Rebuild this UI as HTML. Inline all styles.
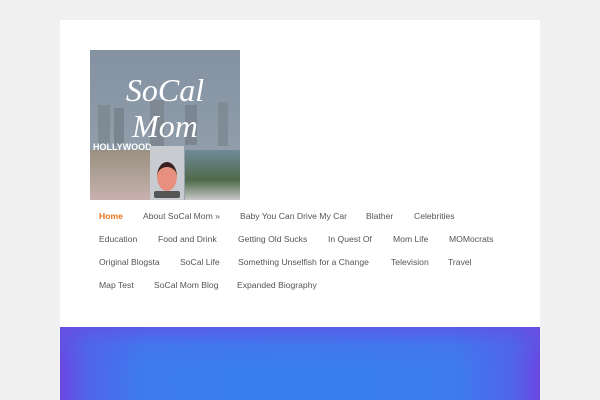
<!DOCTYPE html>
<html><head><style>
html,body{margin:0;padding:0;}
body{width:600px;height:400px;background:#f0f0f0;position:relative;overflow:hidden;font-family:"Liberation Sans",sans-serif;}
.card{position:absolute;left:60px;top:20px;width:480px;height:380px;background:#fff;}
.logo{position:absolute;left:90px;top:50px;width:150px;height:150px;overflow:hidden;background:linear-gradient(#8391a2 0%,#8d9aa8 50%,#9aa5ae 100%);}
.n{position:absolute;font-size:8.6px;color:#555;white-space:nowrap;}
.blue{position:absolute;left:60px;top:327px;width:480px;height:73px;background:linear-gradient(90deg,#6a47e2 0%,#4f66ea 6%,#3c7cf0 18%,#3a7ff0 50%,#3c7cf0 82%,#4f66ea 94%,#6a47e2 100%);}
.blue:after{content:"";position:absolute;left:0;top:0;width:100%;height:100%;background:linear-gradient(rgba(100,80,228,0.7) 0%,rgba(80,100,232,0.3) 25%,rgba(60,125,240,0) 55%);}
</style></head><body>
<div class="card"></div>
<div class="logo">
  <div style="position:absolute;left:8px;top:55px;width:12px;height:40px;background:#7f8a95"></div>
  <div style="position:absolute;left:24px;top:58px;width:10px;height:38px;background:#7a8590"></div>
  <div style="position:absolute;left:60px;top:50px;width:14px;height:46px;background:#7d8893"></div>
  <div style="position:absolute;left:95px;top:55px;width:12px;height:40px;background:#7b8692"></div>
  <div style="position:absolute;left:128px;top:52px;width:10px;height:44px;background:#808b96"></div>
  <div style="position:absolute;left:0;top:100px;width:60px;height:50px;background:linear-gradient(#9a9080,#b8a8a0 70%,#c9b0b0)"></div>
  <div style="position:absolute;left:95px;top:100px;width:55px;height:50px;background:linear-gradient(#6f8a98,#4f6a4a 60%,#c8c8c8)"></div>
  <div style="position:absolute;left:3px;top:92px;font:bold 9px 'Liberation Sans',sans-serif;color:#fff">HOLLYWOOD</div>
  <div style="position:absolute;left:60px;top:96px;width:34px;height:54px;background:#c8ccd0"></div>
  <div style="position:absolute;left:67px;top:112px;width:20px;height:24px;border-radius:50%;background:#e89080;border-top:5px solid #3a2020"></div>
  <div style="position:absolute;left:64px;top:141px;width:26px;height:7px;background:#555;border-radius:2px"></div>
  <div style="position:absolute;left:0;top:22px;width:150px;text-align:center;font:italic 32px/36px 'Liberation Serif',serif;color:#fff">SoCal<br>Mom</div>
</div>
<span class="n" style="left:99px;top:211px;color:#e8741c;font-weight:bold">Home</span>
<span class="n" style="left:143px;top:211px">About SoCal Mom »</span>
<span class="n" style="left:240px;top:211px">Baby You Can Drive My Car</span>
<span class="n" style="left:366px;top:211px">Blather</span>
<span class="n" style="left:414px;top:211px">Celebrities</span>
<span class="n" style="left:99px;top:234px">Education</span>
<span class="n" style="left:158px;top:234px">Food and Drink</span>
<span class="n" style="left:238px;top:234px">Getting Old Sucks</span>
<span class="n" style="left:328px;top:234px">In Quest Of</span>
<span class="n" style="left:393px;top:234px">Mom Life</span>
<span class="n" style="left:449px;top:234px">MOMocrats</span>
<span class="n" style="left:99px;top:257px">Original Blogsta</span>
<span class="n" style="left:180px;top:257px">SoCal Life</span>
<span class="n" style="left:238px;top:257px">Something Unselfish for a Change</span>
<span class="n" style="left:391px;top:257px">Television</span>
<span class="n" style="left:448px;top:257px">Travel</span>
<span class="n" style="left:99px;top:280px">Map Test</span>
<span class="n" style="left:154px;top:280px">SoCal Mom Blog</span>
<span class="n" style="left:237px;top:280px">Expanded Biography</span>
<div class="blue"></div>
</body></html>
